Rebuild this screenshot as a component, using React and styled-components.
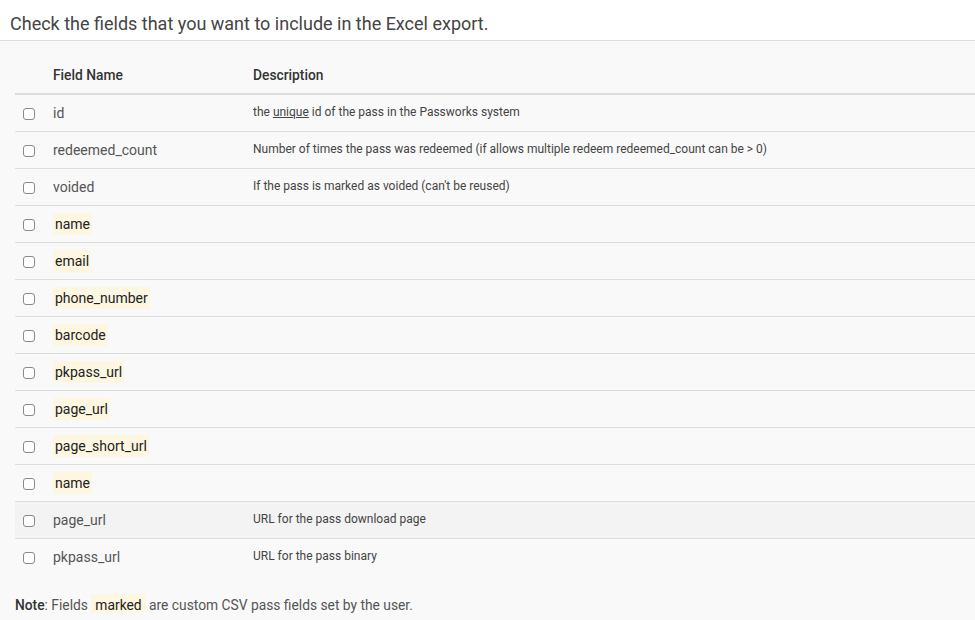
import React from "react";
import styled, { createGlobalStyle } from "styled-components";

const GlobalStyle = createGlobalStyle`
  body {
    margin: 0;
    background: #f9f9f9;
    font-family: Roboto, "Liberation Sans", sans-serif;
    color: #444;
  }
`;

const TopBar = styled.div`
  height: 41px;
  box-sizing: border-box;
  padding: 6px 0 0 10px;
  display: flex;
  align-items: center;
  background: #fff;
  border-bottom: 1px solid #ddd;
  font-size: 18px;
  color: #444;
`;

const Body = styled.div`
  padding-left: 15px;
`;

const Table = styled.table`
  width: 100%;
  border-collapse: collapse;
  font-size: 14px;
`;

const HeadCell = styled.th`
  height: 53px;
  box-sizing: border-box;
  padding: 0 0 10px;
  vertical-align: bottom;
  text-align: left;
  font-size: 13.8px;
  font-weight: 500;
  color: #333;
  border-bottom: 2px solid #ddd;
  width: ${(p) => p.$w || "auto"};
`;

const Row = styled.tr`
  background: ${(p) => (p.$hover ? "#f3f3f3" : "transparent")};
  border-bottom: ${(p) => (p.$last ? "none" : "1px solid #ddd")};
`;

const Cell = styled.td`
  height: 37px;
  box-sizing: border-box;
  padding: 0;
  vertical-align: middle;
`;

const CheckCell = styled(Cell)`
  width: 38px;
  padding-left: 8px;
`;

const Box = styled.span`
  display: block;
  width: 12px;
  height: 12px;
  box-sizing: border-box;
  border: 1px solid #8a8a8a;
  border-radius: 3px;
  background: #fff;
  margin-top: 2px;
`;

const FieldName = styled.span`
  display: inline-block;
  color: ${(p) => (p.$custom ? "#222" : "#555")};
  background: ${(p) => (p.$custom ? "#fdf6e0" : "transparent")};
  padding: ${(p) => (p.$custom ? "3px 2px" : "3px 0")};
  line-height: 16px;
`;

const DescCell = styled(Cell)`
  font-size: 12px;
  color: #444;
  padding-bottom: 2px;
`;

const U = styled.span`
  text-decoration: underline;
`;

const Note = styled.p`
  margin: 22px 0 0;
  font-size: 13.8px;
  color: #555;
`;

const NoteLabel = styled.span`
  font-weight: 500;
  color: #333;
`;

const Mark = styled.span`
  background: #fdf6e0;
  color: #222;
  padding: 3px 4px;
`;

const rows = [
  { name: "id", desc: <>the <U>unique</U> id of the pass in the Passworks system</> },
  { name: "redeemed_count", desc: "Number of times the pass was redeemed (if allows multiple redeem redeemed_count can be > 0)" },
  { name: "voided", desc: "If the pass is marked as voided (can't be reused)" },
  { name: "name", custom: true },
  { name: "email", custom: true },
  { name: "phone_number", custom: true },
  { name: "barcode", custom: true },
  { name: "pkpass_url", custom: true },
  { name: "page_url", custom: true },
  { name: "page_short_url", custom: true },
  { name: "name", custom: true },
  { name: "page_url", desc: "URL for the pass download page", hover: true },
  { name: "pkpass_url", desc: "URL for the pass binary" },
];

export default function App() {
  return (
    <>
      <GlobalStyle />
      <TopBar>Check the fields that you want to include in the Excel export.</TopBar>
      <Body>
        <Table>
          <thead>
            <tr>
              <HeadCell $w="38px" />
              <HeadCell $w="200px">Field Name</HeadCell>
              <HeadCell>Description</HeadCell>
            </tr>
          </thead>
          <tbody>
            {rows.map((r, i) => (
              <Row key={i} $hover={r.hover} $last={i === rows.length - 1}>
                <CheckCell>
                  <Box />
                </CheckCell>
                <Cell>
                  <FieldName $custom={r.custom}>{r.name}</FieldName>
                </Cell>
                <DescCell>{r.desc}</DescCell>
              </Row>
            ))}
          </tbody>
        </Table>
        <Note>
          <NoteLabel>Note</NoteLabel>: Fields <Mark>marked</Mark> are custom CSV pass fields set by the user.
        </Note>
      </Body>
    </>
  );
}
